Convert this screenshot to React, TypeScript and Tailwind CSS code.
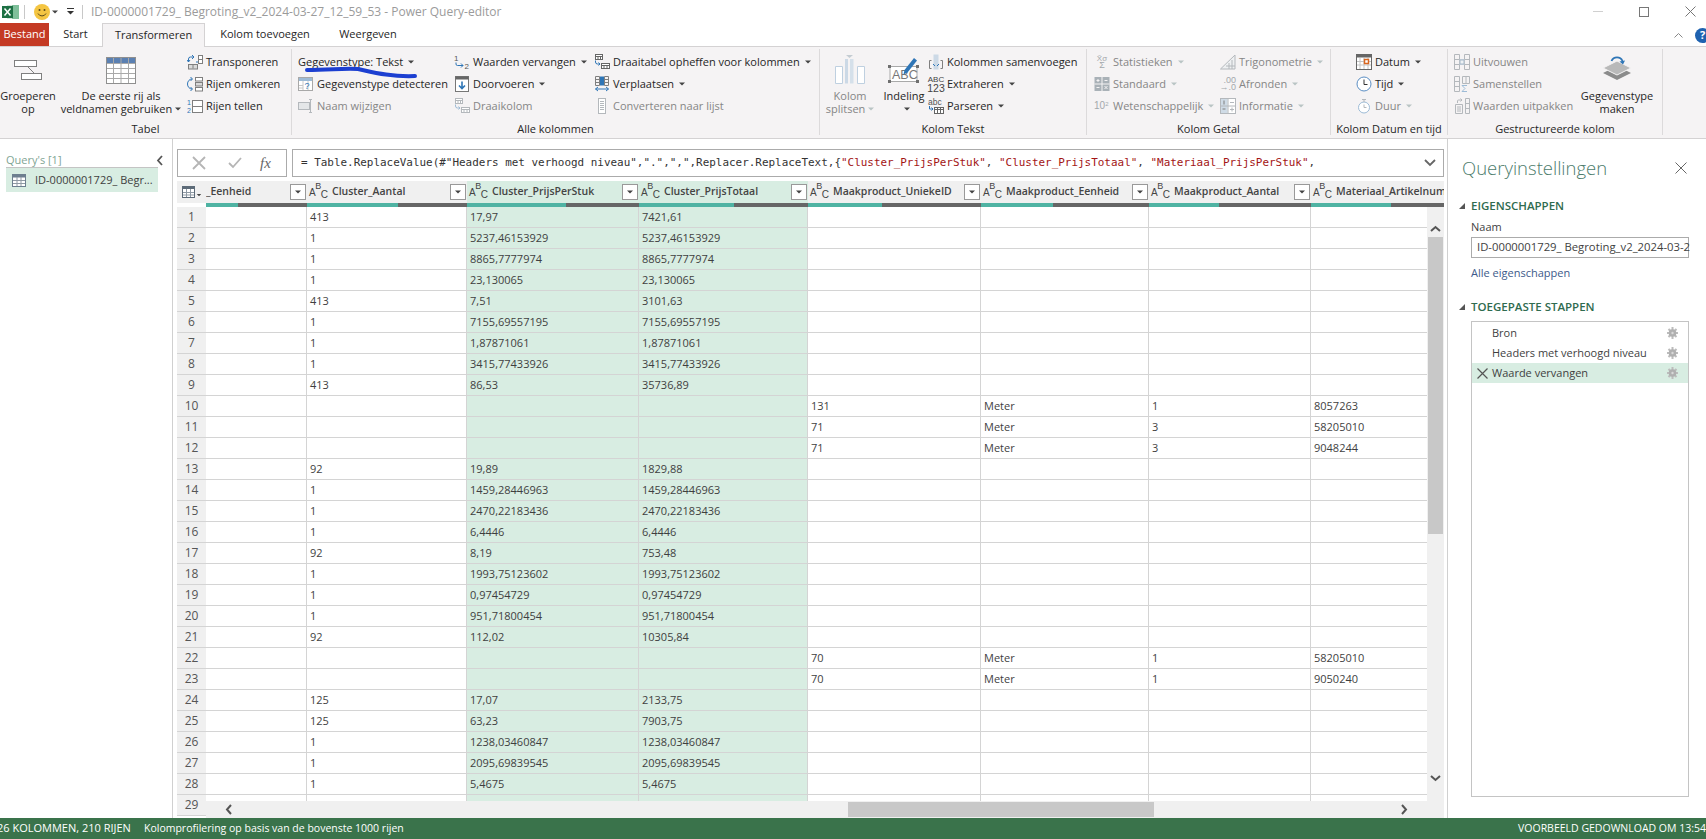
import type { ReactNode } from "react";

const GR = "#7f7f7f";
const LG = "#b4b8bc";
const BL = "#2e75b6";
const LB = "#9dbbd6";

function Ico({ w = 16, h = 16, children }: { w?: number; h?: number; children: ReactNode }) {
  return (
    <svg width={w} height={h} viewBox={`0 0 ${w} ${h}`} fill="none" strokeWidth="1" className="shrink-0">
      {children}
    </svg>
  );
}

function Caret({ off, className = "ml-[5px]" }: { off?: boolean; className?: string }) {
  return (
    <svg width="6" height="4" viewBox="0 0 6 4" className={`shrink-0 ${className}`}>
      <path d="M0 0.5h6L3 3.5z" fill={off ? "#b9c4c4" : "#444"} />
    </svg>
  );
}

function Small({ icon, label, caret, off }: { icon?: ReactNode; label: string; caret?: boolean; off?: boolean }) {
  return (
    <div className={`flex h-[22px] items-center whitespace-nowrap ${off ? "text-[#868686]" : "text-[#262626]"}`}>
      {icon && <span className="flex w-[19px] shrink-0">{icon}</span>}
      <span>{label}</span>
      {caret && <Caret off={off} />}
    </div>
  );
}

function Large({ icon, lines, caret, off, className }: { icon: ReactNode; lines: string[]; caret?: "inline" | "below"; off?: boolean; className: string }) {
  return (
    <div className={`flex shrink-0 flex-col items-center leading-[13px] whitespace-nowrap ${off ? "text-[#868686]" : "text-[#262626]"} ${className}`}>
      <div className="flex h-[38px] items-center justify-center">{icon}</div>
      {lines.map((l, i) => (
        <div key={l} className="flex h-[13px] items-center">
          {l}
          {caret === "inline" && i === lines.length - 1 && <Caret off={off} className="ml-[3px]" />}
        </div>
      ))}
      {caret === "below" && (
        <div className="flex h-[13px] items-center">
          <Caret />
        </div>
      )}
    </div>
  );
}

function Group({ label, className, children }: { label: string; className: string; children: ReactNode }) {
  return (
    <div className={`flex h-[86px] shrink-0 flex-col border-r border-[#dcdadb] ${className}`}>
      <div className="flex h-[68px] pt-[2px]">{children}</div>
      <div className="mt-[4px] h-[16px] text-center leading-[16px] whitespace-nowrap text-[#262626]">{label}</div>
    </div>
  );
}

function Col({ className = "", children }: { className?: string; children: ReactNode }) {
  return <div className={`flex shrink-0 flex-col ${className}`}>{children}</div>;
}

const IconGroup = (
  <Ico w={30} h={22}>
    <rect x="1.5" y="1.5" width="22" height="6" fill="#fff" stroke={GR} />
    <rect x="8.5" y="14.5" width="20" height="6" fill="#fff" stroke={GR} />
    <path d="M15 8l6 6" stroke={GR} />
  </Ico>
);

const IconHeaderRow = (
  <Ico w={30} h={27}>
    <rect x="0.5" y="0.5" width="29" height="26" fill="#fff" stroke="#8f8f8f" />
    <rect x="1" y="1" width="28" height="5" fill="#5b80b2" />
    <path d="M7.5 1v25M15 1v25M22.5 1v25M1 11.5h28M1 16.5h28M1 21.5h28M1 6.5h28" stroke="#a9a9a9" />
  </Ico>
);

const IconTranspose = (
  <Ico>
    <path d="M1.5 8V5a2 2 0 0 1 2-2H7M5 1l2 2-2 2M0 6l1.5 2L3 6" stroke={BL} />
    <path d="M9 8h2" stroke={BL} />
    <rect x="11.5" y="1.5" width="4" height="8" fill="#fff" stroke={GR} />
    <path d="M12 5.5h3" stroke={GR} />
    <rect x="1.5" y="10.5" width="9" height="4.5" fill="#d9d9d9" stroke={GR} />
    <path d="M6 10.5v4" stroke={GR} />
  </Ico>
);

const IconReverse = (
  <Ico>
    <path d="M5 3a4.5 5 0 0 0 0 10M3.5 1l2 2-2 2M3.5 11l2 2-2 2" stroke={BL} />
    <rect x="8.5" y="1.5" width="7" height="3.5" fill="#fff" stroke={GR} />
    <rect x="8.5" y="6.5" width="7" height="3.5" fill="#d9d9d9" stroke={GR} />
    <rect x="8.5" y="11.5" width="7" height="3.5" fill="#fff" stroke={GR} />
  </Ico>
);

const IconCount = (
  <Ico>
    <text x="0" y="7" fontSize="7" fill={BL} fontFamily="Liberation Sans">1</text>
    <text x="0" y="15" fontSize="7" fill={BL} fontFamily="Liberation Sans">2</text>
    <rect x="5.5" y="2.5" width="10" height="12" fill="#fff" stroke={GR} />
    <path d="M6 8.5h9" stroke={GR} />
  </Ico>
);

const IconDetect = (
  <Ico>
    <rect x="0.5" y="1.5" width="14" height="13" fill="#fff" stroke="#a8a8a8" />
    <rect x="1" y="2" width="13" height="3" fill={LB} />
    <path d="M5 5v9M10 5v9M1 9.5h4M1 12h4" stroke="#c8c8c8" />
    <text x="6.5" y="13" fontSize="9" fill={BL} fontFamily="Liberation Sans">?</text>
  </Ico>
);

const IconRename = (
  <Ico>
    <rect x="0.5" y="4.5" width="11" height="7" fill="#e4e6e8" stroke={LG} />
    <path d="M11 1.5h3M11 14.5h3M12.5 2v12" stroke={LG} />
  </Ico>
);

const IconReplace = (
  <Ico h={18}>
    <text x="0" y="8" fontSize="8" fill="#555" fontFamily="Liberation Sans">1</text>
    <text x="10.5" y="16" fontSize="8" fill="#555" fontFamily="Liberation Sans">2</text>
    <path d="M2 9.5v1.5a1.5 1.5 0 0 0 1.5 1.5H9M7 10.5l2 2-2 2" stroke={BL} />
  </Ico>
);

const IconFill = (
  <Ico>
    <rect x="1.5" y="0.5" width="13" height="15" fill="#fff" stroke="#777" />
    <rect x="1.5" y="0.5" width="13" height="3" fill="#666" />
    <path d="M8 5.5v7M5 9.5l3 3 3-3" stroke={BL} strokeWidth="1.6" />
  </Ico>
);

const pivot = (c: string, a: string) => (
  <Ico>
    <rect x="1.5" y="0.5" width="7" height="5" fill="#fff" stroke={c} />
    <path d="M1.5 2.5h7M4 3v2M6.5 3v2" stroke={c} />
    <path d="M1.5 6.5v1.5a2 2 0 0 0 2 2H6M4.5 8.5l1.5 1.5-1.5 1.5" stroke={a} />
    <rect x="7.5" y="9.5" width="8" height="5" fill="#fff" stroke={c} />
    <path d="M7.5 11.5h8M10 11.5v3M13 11.5v3" stroke={c} />
  </Ico>
);

const IconMove = (
  <Ico>
    <path d="M1.5 0.5h4v9h-4zM10.5 0.5h4v9h-4zM2 3.5h3M2 6.5h3M11 3.5h3M11 6.5h3" stroke={GR} />
    <rect x="6" y="0.5" width="4" height="9" fill={BL} />
    <path d="M1.5 13h13M4 11l-2.5 2L4 15M12 11l2.5 2-2.5 2" stroke={BL} />
  </Ico>
);

const IconList = (
  <Ico>
    <rect x="4.5" y="0.5" width="7" height="15" fill="#fff" stroke={LG} />
    <path d="M6 3.5h4M6 5.5h4M6 7.5h4M6 9.5h4M6 11.5h4" stroke={LG} />
  </Ico>
);

const IconSplit = (
  <Ico w={30} h={30}>
    <path d="M0.5 11.5h7v17h-7zM22.5 11.5h7v17h-7z" fill="#fff" stroke="#bfd0e0" />
    <path d="M10 4h3v24.5h-3z" fill="#ccd9e6" />
    <path d="M15 4h3.5v24.5H15z" fill="#d5e0ea" />
    <path d="M11 0h7l-3.500 3z" fill="#c4ccd2" />
  </Ico>
);

const IconFormat = (
  <Ico w={32} h={28}>
    <rect x="2" y="10.500" width="27" height="15" fill="#fff" stroke="#a9a9a9" />
    <rect x="0" y="9" width="3" height="3" fill="#6f6f6f" />
    <rect x="28" y="9" width="3" height="3" fill="#6f6f6f" />
    <rect x="0" y="24" width="3" height="3" fill="#6f6f6f" />
    <rect x="28" y="24" width="3" height="3" fill="#6f6f6f" />
    <text x="4" y="23" fontSize="12.500" fill="#777" fontFamily="Liberation Sans">ABC</text>
    <path d="M26 2l3 2.500-9.500 12-4 2 1-4.500z" fill={BL} />
  </Ico>
);

const IconMerge = (
  <Ico>
    <path d="M3.500 6.500h-2v8h2M12.500 6.500h2v8h-2" stroke={GR} />
    <rect x="5.500" y="0.500" width="5" height="15" fill="#ccd9e6" />
    <path d="M5 10l2 2M11 10l-2 2" stroke={BL} />
  </Ico>
);

const IconExtract = (
  <span className="flex w-[16px] flex-col items-center font-['Liberation_Sans'] text-[#444]">
    <span className="text-[8px] leading-[8px]">ABC</span>
    <span className="text-[10.500px] leading-[9px]">123</span>
  </span>
);

const IconParse = (
  <span className="relative flex h-[16px] w-[16px] flex-col">
    <span className="font-['Liberation_Sans'] text-[8.500px] leading-[8px] text-[#555]">abc</span>
    <Ico h={8}>
      <path d="M1.500 0v3h3.500M3.500 1.500L5 3 3.500 4.500" stroke={BL} />
      <rect x="6.500" y="1.500" width="9" height="6" fill="#fff" stroke="#666" />
      <path d="M6.500 3.500h9M9.500 2v5M12.500 2v5" stroke="#666" />
    </Ico>
  </span>
);

const IconStats = (
  <span className="flex w-[16px] flex-col items-center font-['Liberation_Sans'] leading-[7px] text-[#a3a8ac]">
    <span className="text-[8px]">X̄σ</span>
    <span className="text-[9px]">Σ</span>
  </span>
);

const IconStandard = (
  <Ico>
    <rect x="0.500" y="1" width="15" height="14" fill="#a9b1b7" />
    <path d="M8 1v14M0.500 8h15" stroke="#f5f3f4" />
    <path d="M2.500 4.500h3M4 3v3M10.500 4.500h3M2.500 11.500h3M10.500 10l3 3M13.500 10l-3 3" stroke="#f5f3f4" />
  </Ico>
);

const IconPow = (
  <span className="flex w-[16px] font-['Liberation_Sans'] text-[10px] leading-[10px] text-[#a3a8ac]">
    10<span className="text-[6px] leading-[6px]">2</span>
  </span>
);

const IconTrig = (
  <Ico>
    <path d="M0.500 15L15 1v14z" fill="#eef0f2" stroke={LG} />
    <path d="M9 15v-6M12 15v-9M6 12h9" stroke={LG} />
  </Ico>
);

const IconRound = (
  <span className="flex w-[16px] flex-col items-end font-['Liberation_Sans'] text-[9px] leading-[7px] text-[#a3a8ac]">
    <span>.00</span>
    <span>→.0</span>
  </span>
);

const IconInfo = (
  <Ico>
    <rect x="0.500" y="0.500" width="15" height="15" fill="#fff" stroke={LG} />
    <rect x="1" y="1" width="6.500" height="14" fill="#cfdbe6" />
    <path d="M8 1v14M1 8h14M10 4.500h4M10 11.500h4M12 9.500v4" stroke={LG} />
    <path d="M4 2.500v4M2.500 11h3" stroke={GR} />
  </Ico>
);

const IconDate = (
  <Ico>
    <rect x="0.500" y="0.500" width="15" height="15" fill="#fff" stroke="#666" />
    <rect x="0.500" y="0.500" width="15" height="3" fill="#666" />
    <path d="M4 4v11M8 4v11M12 4v11M1 7.500h14M1 11h14" stroke="#c4c4c4" />
    <rect x="8.500" y="5.500" width="4" height="4" fill="#fff" stroke="#d9661f" strokeWidth="1.500" />
  </Ico>
);

const IconTime = (
  <Ico>
    <circle cx="8" cy="8" r="7" fill="#fff" stroke="#5b8ec4" />
    <path d="M8 3.500V8.500h3.500" stroke="#333" />
  </Ico>
);

const IconDuration = (
  <Ico>
    <circle cx="8" cy="9.500" r="5.500" fill="#fff" stroke={LB} />
    <path d="M6 1.500h4M8 2v2M8 6.500v3h2.500" stroke={LG} />
  </Ico>
);

const IconExpand = (
  <Ico>
    <path d="M0.500 0.500h5v15h-5zM10.500 0.500h5v15h-5zM1 5.500h4M1 10.500h4M11 5.500h4M11 10.500h4" stroke={LG} />
    <rect x="5.500" y="5" width="5" height="6" fill="#b9c7d4" />
    <path d="M6.500 8h3M8 6.500v3" stroke="#fff" />
  </Ico>
);

const IconAggregate = (
  <Ico>
    <path d="M0.500 0.500h5v15h-5zM8.500 0.500h7v7h-7zM12 1v6M1 5.500h4M1 10.500h4" stroke={LG} />
    <path d="M13 9.500H8l3 3-3 3h5" stroke={LB} />
  </Ico>
);

const IconExtractValues = (
  <Ico>
    <path d="M1.500 6.500h7v9h-7zM3 9h4M3 11h4M3 13h4" stroke={LG} />
    <path d="M11.500 0.500h4v15h-4zM12 5.500h3M12 10.500h3" stroke={LG} />
    <path d="M3.500 5V3a1 1 0 0 1 1-1H8M6.500 0.500L8 2 6.500 3.500" stroke={LG} />
  </Ico>
);

const IconDataType = (
  <Ico w={30} h={30}>
    <path d="M15 11l14 7-14 7-14-7z" fill="#8b8b8b" />
    <path d="M15 20L29 13 15 6 1 13z" fill="#b9b9b9" stroke="#f5f3f4" />
    <path d="M9.500 7a6 6 0 0 1 11 0" stroke={BL} strokeWidth="1.800" transform="translate(0 -1)" />
    <path d="M17.500 6.500l3.500 3 2-4z" fill={BL} />
  </Ico>
);

function Excel() {
  return (
    <svg width="17" height="16" viewBox="0 0 17 16" className="shrink-0">
      <rect x="5" y="1" width="12" height="14" fill="#d6e6dc" />
      <rect x="10" y="1" width="7" height="14" fill="#7fbf9a" />
      <rect x="0" y="2" width="11" height="12" fill="#1d7044" />
      <path d="M2.500 4.500l6 7M8.500 4.500l-6 7" stroke="#fff" strokeWidth="1.500" />
    </svg>
  );
}

function Smiley() {
  return (
    <svg width="16" height="16" viewBox="0 0 16 16" className="shrink-0">
      <circle cx="8" cy="8" r="8" fill="#f4c542" />
      <circle cx="5.500" cy="6" r="1" fill="#5b4a1a" />
      <circle cx="10.500" cy="6" r="1" fill="#5b4a1a" />
      <path d="M4 9.500a4.500 4.500 0 0 0 8 0" stroke="#5b4a1a" fill="none" />
    </svg>
  );
}

function TableGlyph() {
  return (
    <svg width="14" height="13" viewBox="0 0 14 13" className="shrink-0">
      <rect x="0.500" y="0.500" width="13" height="12" fill="#fff" stroke="#6d7f8f" />
      <rect x="1" y="1" width="12" height="2.500" fill="#6d7f8f" />
      <path d="M5 3v9M9 3v9M1 6.500h12M1 9.500h12" stroke="#8f9aa4" />
    </svg>
  );
}

function Gear() {
  return (
    <svg width="11" height="12" viewBox="0 0 11 12" className="shrink-0">
      <path d="M5.500 0v12M0 6h11M1.500 2l8 8M9.500 2l-8 8" stroke="#bcbcbc" strokeWidth="2" />
      <circle cx="5.500" cy="6" r="3.800" fill="#b0b0b0" />
      <circle cx="5.500" cy="6" r="1.200" fill="#d8d8d8" />
    </svg>
  );
}

const V = (s: string) => [s, s] as const;

type Row = { aantal?: string; stuk?: string; totaal?: string; id?: string; unit?: string; qty?: string; art?: string };

const c = (aantal: string, stuk: string, totaal: string): Row => ({ aantal, stuk, totaal });
const m = (id: string, qty: string, art: string): Row => ({ id, unit: "Meter", qty, art });
const s = (v: string): Row => {
  const [a, b] = V(v);
  return c("1", a, b);
};

const ROWS: Row[] = [
  c("413", "17,97", "7421,61"),
  s("5237,46153929"),
  s("8865,7777974"),
  s("23,130065"),
  c("413", "7,51", "3101,63"),
  s("7155,69557195"),
  s("1,87871061"),
  s("3415,77433926"),
  c("413", "86,53", "35736,89"),
  m("131", "1", "8057263"),
  m("71", "3", "58205010"),
  m("71", "3", "9048244"),
  c("92", "19,89", "1829,88"),
  s("1459,28446963"),
  s("2470,22183436"),
  s("6,4446"),
  c("92", "8,19", "753,48"),
  s("1993,75123602"),
  s("0,97454729"),
  s("951,71800454"),
  c("92", "112,02", "10305,84"),
  m("70", "1", "58205010"),
  m("70", "1", "9050240"),
  c("125", "17,07", "2133,75"),
  c("125", "63,23", "7903,75"),
  s("1238,03460847"),
  s("2095,69839545"),
  s("5,4675"),
  {},
];

const COLS = [
  { name: "_Eenheid", w: "w-[101px]", teal: 32, typed: false },
  { name: "Cluster_Aantal", w: "w-[160px]", teal: 91, typed: true },
  { name: "Cluster_PrijsPerStuk", w: "w-[172px]", teal: 99, typed: true, sel: true },
  { name: "Cluster_PrijsTotaal", w: "w-[169px]", teal: 95, typed: true, sel: true },
  { name: "Maakproduct_UniekeID", w: "w-[173px]", teal: 74, typed: true },
  { name: "Maakproduct_Eenheid", w: "w-[168px]", teal: 72, typed: true },
  { name: "Maakproduct_Aantal", w: "w-[162px]", teal: 70, typed: true },
  { name: "Materiaal_Artikelnum", w: "w-[200px]", teal: 80, typed: true },
];

function HeaderCell({ col }: { col: (typeof COLS)[number] }) {
  return (
    <div className={`flex h-[26px] shrink-0 flex-col ${col.w}`}>
      <div className={`flex h-[22px] items-center overflow-hidden ${col.sel ? "bg-[#d8ede2]" : "bg-[#f0f0f0]"}`}>
        {col.typed && (
          <span className="ml-[2px] flex w-[23px] shrink-0 font-['Liberation_Sans'] text-[10px] leading-none text-[#444]">
            <span className="mt-[3px]">A</span>
            <span className="-mt-[3px] -ml-[0.5px] text-[9px]">B</span>
            <span className="mt-[5px] -ml-[0.5px]">C</span>
          </span>
        )}
        <span className="flex-1 overflow-hidden text-[10.500px] font-semibold whitespace-nowrap text-[#444]">{col.name}</span>
        {col.name !== "Materiaal_Artikelnum" && (
          <span className="mr-[1px] flex h-[16px] w-[16px] shrink-0 items-center justify-center border border-[#999] bg-white">
            <Caret className="" />
          </span>
        )}
      </div>
      <div className="flex h-[4px] bg-[#666]">
        <div className="h-full bg-[#4fb3a3]" style={{ width: col.teal }} />
      </div>
    </div>
  );
}

function Cell({ w, text, sel }: { w: string; text?: string; sel?: boolean }) {
  return (
    <div className={`flex h-[21px] shrink-0 items-center border-r border-b border-[#d4d4d4] pl-[3px] text-[#3f3f3f] ${w} ${sel ? "bg-[#d8ede2]" : "bg-white"}`}>
      {text}
    </div>
  );
}

function DataGrid() {
  return (
    <div className="relative min-h-0 flex-1 overflow-hidden">
      <div className="flex">
        <div className="flex h-[22px] w-[29px] shrink-0 items-center gap-[1px] bg-[#f0f0f0] pl-[5px]">
          <svg width="13" height="12" viewBox="0 0 13 12" className="shrink-0">
            <rect x="0.500" y="0.500" width="12" height="11" fill="#fff" stroke="#5d6b78" />
            <rect x="1" y="1" width="11" height="2" fill="#5d6b78" />
            <path d="M4.500 3v8M8.500 3v8M1 6.500h11M1 9h11" stroke="#8f9aa4" />
          </svg>
          <Caret className="mt-[6px] scale-75" />
        </div>
        {COLS.map((col) => (
          <HeaderCell key={col.name} col={col} />
        ))}
      </div>
      {ROWS.map((r, i) => (
        <div key={i} className="flex">
          <div className="flex h-[21px] w-[29px] shrink-0 items-center justify-center border-b border-[#d4d4d4] bg-[#f0f0f0] text-[12px] text-[#555]">{i + 1}</div>
          <Cell w={COLS[0].w} />
          <Cell w={COLS[1].w} text={r.aantal} />
          <Cell w={COLS[2].w} text={r.stuk} sel />
          <Cell w={COLS[3].w} text={r.totaal} sel />
          <Cell w={COLS[4].w} text={r.id} />
          <Cell w={COLS[5].w} text={r.unit} />
          <Cell w={COLS[6].w} text={r.qty} />
          <Cell w={COLS[7].w} text={r.art} />
        </div>
      ))}
      {/* scrollbars lie over the grid */}
      <div className="absolute top-[26px] right-0 bottom-[17px] flex w-[17px] flex-col items-center bg-[#f0f0f0]">
        <svg width="11" height="7" viewBox="0 0 11 7" className="mt-[18px] shrink-0">
          <path d="M1 6l4.500-4L10 6" stroke="#555" strokeWidth="2" fill="none" />
        </svg>
        <div className="mt-[5px] h-[297px] w-[15px] bg-[#c8c8c8]" />
        <svg width="11" height="7" viewBox="0 0 11 7" className="mt-auto mb-[19px] shrink-0">
          <path d="M1 1l4.500 4L10 1" stroke="#555" strokeWidth="2" fill="none" />
        </svg>
      </div>
      <div className="absolute right-0 bottom-0 left-[29px] flex h-[17px] items-center bg-[#f0f0f0]">
        <svg width="7" height="11" viewBox="0 0 7 11" className="ml-[19px] shrink-0">
          <path d="M6 1L2 5.500 6 10" stroke="#555" strokeWidth="2" fill="none" />
        </svg>
        <div className="ml-[616px] h-[15px] w-[306px] bg-[#c8c8c8]" />
        <svg width="7" height="11" viewBox="0 0 7 11" className="ml-[247px] shrink-0">
          <path d="M1 1l4 4.500L1 10" stroke="#555" strokeWidth="2" fill="none" />
        </svg>
      </div>
    </div>
  );
}

const Str = ({ children }: { children: string }) => <span className="text-[#a31515]">{children}</span>;

function FormulaBar() {
  return (
    <div className="flex h-[28px] shrink-0 gap-[5px]">
      <div className="flex w-[110px] shrink-0 items-center border border-[#ababab] bg-white text-[#b5b5b5]">
        <svg width="14" height="14" viewBox="0 0 14 14" className="ml-[14px] shrink-0">
          <path d="M1 1l12 12M13 1L1 13" stroke="#b5b5b5" strokeWidth="1.800" />
        </svg>
        <svg width="14" height="12" viewBox="0 0 14 12" className="ml-[22px] shrink-0">
          <path d="M1 6l4 4 8-9" stroke="#b5b5b5" strokeWidth="1.800" fill="none" />
        </svg>
        <span className="ml-[18px] font-['Liberation_Serif'] text-[15px] text-[#666] italic">fx</span>
      </div>
      <div className="flex min-w-0 flex-1 items-center border border-[#ababab] bg-white pl-[8px]">
        <span className="flex-1 overflow-hidden font-['DejaVu_Sans_Mono'] text-[10.950px] whitespace-pre text-[#333]">
          {'= Table.ReplaceValue(#"Headers met verhoogd niveau",".",",",Replacer.ReplaceText,{'}
          <Str>"Cluster_PrijsPerStuk"</Str>
          {", "}
          <Str>"Cluster_PrijsTotaal"</Str>
          {", "}
          <Str>"Materiaal_PrijsPerStuk"</Str>
          {","}
        </span>
        <svg width="12" height="8" viewBox="0 0 12 8" className="mr-[7px] shrink-0">
          <path d="M1 1l5 5 5-5" stroke="#666" strokeWidth="1.800" fill="none" />
        </svg>
      </div>
    </div>
  );
}

function Section({ label }: { label: string }) {
  return (
    <div className="flex h-[16px] items-center text-[11.500px] font-semibold whitespace-nowrap text-[#2f6b4f]">
      <svg width="6" height="6" viewBox="0 0 6 6" className="mr-[6px] -ml-[12px] shrink-0">
        <path d="M6 0v6H0z" fill="#555" />
      </svg>
      {label}
    </div>
  );
}

function Step({ label, active }: { label: string; active?: boolean }) {
  return (
    <div className={`flex h-[20px] items-center pr-[10px] ${active ? "bg-[#d8ede2]" : ""}`}>
      <span className="flex w-[20px] shrink-0 justify-center">
        {active && (
          <svg width="11" height="11" viewBox="0 0 11 11">
            <path d="M0.500 0.500l10 10M10.500 0.500l-10 10" stroke="#555" strokeWidth="1.200" />
          </svg>
        )}
      </span>
      <span className="flex-1 whitespace-nowrap text-[#3f3f3f]">{label}</span>
      <Gear />
    </div>
  );
}

function QuerySettings() {
  return (
    <aside className="flex min-w-0 flex-1 flex-col pr-[17px] pl-[23px]">
      <div className="-ml-[9px] flex h-[34px] shrink-0 items-center justify-between pt-[24px] pr-[2px]">
        <span className="text-[18.500px] font-light whitespace-nowrap text-[#4d7c6c]">Queryinstellingen</span>
        <svg width="12" height="12" viewBox="0 0 12 12" className="shrink-0">
          <path d="M0.500 0.500l11 11M11.500 0.500l-11 11" stroke="#666" />
        </svg>
      </div>
      <div className="mt-[25px]">
        <Section label="EIGENSCHAPPEN" />
      </div>
      <div className="mt-[5px] h-[16px] leading-[16px] text-[#3f3f3f]">Naam</div>
      <div className="mt-[2px] flex h-[21px] shrink-0 items-center border border-[#ababab] bg-white pl-[5px] text-[11.300px] whitespace-nowrap text-[#3f3f3f]">
        ID-0000001729_ Begroting_v2_2024-03-2
      </div>
      <div className="mt-[7px] h-[16px] leading-[16px] text-[#3d5a8a]">Alle eigenschappen</div>
      <div className="mt-[18px]">
        <Section label="TOEGEPASTE STAPPEN" />
      </div>
      <div className="mt-[6px] mb-[21px] flex-1 border border-[#c4c4c4] bg-white pt-[1px]">
        <Step label="Bron" />
        <Step label="Headers met verhoogd niveau" />
        <Step label="Waarde vervangen" active />
      </div>
    </aside>
  );
}

export default function App() {
  return (
    <div className="relative flex h-[839px] w-[1706px] flex-col overflow-hidden bg-white font-['Open_Sans',sans-serif] text-[11px]">
      <header className="flex h-[23px] shrink-0 items-center">
        <span className="ml-[2px]">
          <Excel />
        </span>
        <span className="ml-[5px] h-[14px] w-px bg-[#c8c8c8]" />
        <span className="ml-[9px]">
          <Smiley />
        </span>
        <Caret className="ml-[2px]" />
        <svg width="7" height="7" viewBox="0 0 7 7" className="ml-[9px] shrink-0">
          <path d="M0 0.500h7" stroke="#333" />
          <path d="M0 3h7L3.500 6.500z" fill="#333" />
        </svg>
        <span className="ml-[8px] h-[14px] w-px bg-[#c8c8c8]" />
        <span className="ml-[8px] text-[12px] whitespace-nowrap text-[#9b9b9b]">ID-0000001729_ Begroting_v2_2024-03-27_12_59_53 - Power Query-editor</span>
        <div className="-mr-[7px] ml-auto flex">
          <span className="flex w-[46px] items-center justify-center">
            <span className="h-px w-[10px] bg-[#d0d0d0]" />
          </span>
          <span className="flex w-[46px] items-center justify-center">
            <span className="h-[10px] w-[10px] border border-[#777]" />
          </span>
          <span className="flex w-[46px] items-center justify-center">
            <svg width="11" height="11" viewBox="0 0 11 11">
              <path d="M0.500 0.500l10 10M10.500 0.500l-10 10" stroke="#777" />
            </svg>
          </span>
        </div>
      </header>

      <nav className="flex h-[23px] shrink-0 items-stretch text-[11px] text-[#262626]">
        <div className="flex w-[49px] items-center justify-center bg-[#c43a24] text-white">Bestand</div>
        <div className="flex w-[53px] items-center justify-center">Start</div>
        <div className="relative z-10 -mb-px flex w-[103px] items-center justify-center border-x border-t border-[#d4d2d3] bg-[#f5f3f4]">Transformeren</div>
        <div className="flex w-[120px] items-center justify-center">Kolom toevoegen</div>
        <div className="flex w-[86px] items-center justify-center">Weergeven</div>
        <div className="-mr-[4px] ml-auto flex items-center gap-[12px] pt-[1px]">
          <svg width="9" height="5" viewBox="0 0 9 5" className="shrink-0">
            <path d="M0.500 4.500l4-4 4 4" stroke="#888" fill="none" />
          </svg>
          <span className="flex h-[15px] w-[15px] items-center justify-center rounded-full bg-[#1f62b0] text-[11px] font-bold text-white">?</span>
        </div>
      </nav>

      <div className="flex h-[93px] shrink-0 items-start border-y border-[#d4d2d3] bg-[#f5f3f4] pt-[2px]">
        <Group label="Tabel" className="w-[292px]">
          <Large className="w-[56px]" icon={IconGroup} lines={["Groeperen", "op"]} />
          <Large className="ml-[1px] w-[128px]" icon={IconHeaderRow} lines={["De eerste rij als", "veldnamen gebruiken"]} caret="inline" />
          <Col className="ml-[2px]">
            <Small icon={IconTranspose} label="Transponeren" />
            <Small icon={IconReverse} label="Rijen omkeren" />
            <Small icon={IconCount} label="Rijen tellen" />
          </Col>
        </Group>
        <Group label="Alle kolommen" className="w-[528px]">
          <Col className="w-[162px] pl-[6px]">
            <Small label="Gegevenstype: Tekst" caret />
            <Small icon={IconDetect} label="Gegevenstype detecteren" />
            <Small icon={IconRename} label="Naam wijzigen" off />
          </Col>
          <Col className="w-[140px]">
            <Small icon={IconReplace} label="Waarden vervangen" caret />
            <Small icon={IconFill} label="Doorvoeren" caret />
            <Small icon={pivot(LG, LB)} label="Draaikolom" off />
          </Col>
          <Col>
            <Small icon={pivot("#666", BL)} label="Draaitabel opheffen voor kolommen" caret />
            <Small icon={IconMove} label="Verplaatsen" caret />
            <Small icon={IconList} label="Converteren naar lijst" off />
          </Col>
        </Group>
        <Group label="Kolom Tekst" className="w-[267px]">
          <Large className="w-[60px]" icon={IconSplit} lines={["Kolom", "splitsen"]} caret="inline" off />
          <Large className="w-[48px]" icon={IconFormat} lines={["Indeling"]} caret="below" />
          <Col>
            <Small icon={IconMerge} label="Kolommen samenvoegen" />
            <Small icon={IconExtract} label="Extraheren" caret />
            <Small icon={IconParse} label="Parseren" caret />
          </Col>
        </Group>
        <Group label="Kolom Getal" className="w-[244px]">
          <Col className="w-[133px] pl-[7px]">
            <Small icon={IconStats} label="Statistieken" caret off />
            <Small icon={IconStandard} label="Standaard" caret off />
            <Small icon={IconPow} label="Wetenschappelijk" caret off />
          </Col>
          <Col>
            <Small icon={IconTrig} label="Trigonometrie" caret off />
            <Small icon={IconRound} label="Afronden" caret off />
            <Small icon={IconInfo} label="Informatie" caret off />
          </Col>
        </Group>
        <Group label="Kolom Datum en tijd" className="w-[117px]">
          <Col className="pl-[25px]">
            <Small icon={IconDate} label="Datum" caret />
            <Small icon={IconTime} label="Tijd" caret />
            <Small icon={IconDuration} label="Duur" caret off />
          </Col>
        </Group>
        <Group label="Gestructureerde kolom" className="w-[215px]">
          <Col className="w-[124px] pl-[6px]">
            <Small icon={IconExpand} label="Uitvouwen" off />
            <Small icon={IconAggregate} label="Samenstellen" off />
            <Small icon={IconExtractValues} label="Waarden uitpakken" off />
          </Col>
          <Large className="w-[90px]" icon={IconDataType} lines={["Gegevenstype", "maken"]} />
        </Group>
      </div>

      <main className="flex min-h-0 flex-1">
        <aside className="flex w-[173px] shrink-0 flex-col border-r border-[#d0d0d0] pr-[14px] pl-[6px]">
          <div className="mt-[14px] flex h-[14px] items-center justify-between text-[#7fa594]">
            <span>Query's [1]</span>
            <svg width="7" height="11" viewBox="0 0 7 11" className="-mr-[5px] shrink-0">
              <path d="M6 1L2 5.500 6 10" stroke="#555" strokeWidth="1.800" fill="none" />
            </svg>
          </div>
          <div className="flex h-[25px] items-center gap-[9px] border-t border-[#c4c4c4] bg-[#d8ede2] pl-[6px] text-[#3f3f3f]">
            <TableGlyph />
            <span className="whitespace-nowrap">ID-0000001729_ Begr...</span>
          </div>
        </aside>
        <section className="flex w-[1275px] shrink-0 flex-col border-r border-[#d0d0d0] pt-[10px] pr-[3px] pl-[4px]">
          <FormulaBar />
          <div className="h-[4px] shrink-0" />
          <DataGrid />
        </section>
        <QuerySettings />
      </main>

      <footer className="flex h-[21px] shrink-0 items-center bg-[#3a734b] text-[10.500px] text-white">
        <span className="-ml-[3px] w-[147px] text-[11px] whitespace-nowrap">26 KOLOMMEN, 210 RIJEN</span>
        <span className="whitespace-nowrap">Kolomprofilering op basis van de bovenste 1000 rijen</span>
        <span className="ml-auto whitespace-nowrap">VOORBEELD GEDOWNLOAD OM 13:54</span>
      </footer>

      {/* hand drawn marker stroke on the screenshot */}
      <svg width="116" height="14" viewBox="0 0 116 14" className="pointer-events-none absolute top-[66px] left-[304px]">
        <path d="M3 4C26 4 40 2 54 3C68 6 86 11 111 10" stroke="#1c3fd1" strokeWidth="4" strokeLinecap="round" fill="none" />
      </svg>
    </div>
  );
}
